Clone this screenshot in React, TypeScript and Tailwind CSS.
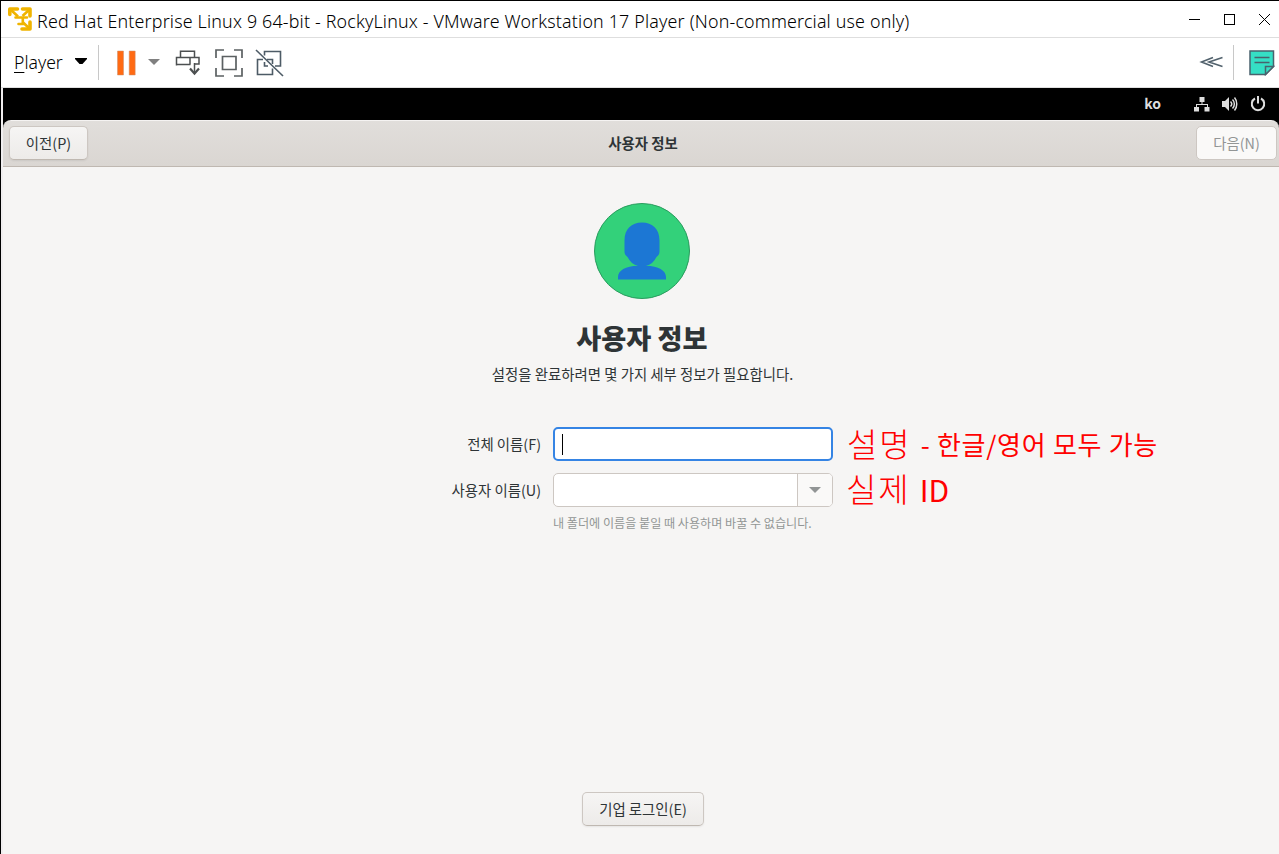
import { ReactNode } from 'react';

const uiFont = "font-['Noto_Sans_CJK_KR','Noto_Sans',sans-serif]";

function VmwareLogo() {
  return (
    <svg width="24" height="24" viewBox="0 0 24 24" fill="none" stroke="#f0b400">
      <path d="M1.800 7.500V2H9.500M14.500 2H22V9M22 15v7H14" strokeWidth="3.600" strokeLinejoin="round" strokeLinecap="round" />
      <path d="M2.500 2.500l7.500 7M21.500 2.500l-7 6.500M21.500 21.500l-7-6.500" strokeWidth="2.600" />
      <path d="M7.500 10.500H19M14.800 10.500v6.500M10.500 17h5" strokeWidth="2.600" strokeLinecap="round" />
    </svg>
  );
}

function TitleBar() {
  return (
    <div className="flex h-[37px] items-center border-b border-[#dedede] bg-white pl-[7px]">
      <VmwareLogo />
      <h1 className="mt-[5px] ml-[5px] font-['Noto_Sans'] text-[17.85px] font-light tracking-[0.175px] whitespace-nowrap text-black">
        Red Hat Enterprise Linux 9 64-bit - RockyLinux - VMware Workstation 17 Player (Non-commercial use only)
      </h1>
      <svg className="ml-auto" width="94" height="24" viewBox="0 0 94 24" fill="none" stroke="#000" shapeRendering="crispEdges">
        <path d="M4 12.500h11M39.500 7.500h10v10h-10z" />
        <path d="M74 7l11 11M85 7L74 18" shapeRendering="auto" />
      </svg>
    </div>
  );
}

function ToolBar() {
  return (
    <div className="flex h-[50px] items-center border-b border-[#e0e0e0] bg-white pl-[12px]">
      <span className="w-[51px] pl-px font-['Noto_Sans'] text-[17.6px] font-light text-black">
        <span className="underline decoration-1 underline-offset-3">P</span>layer
      </span>
      <svg className="mb-[4px] ml-[11px]" width="12" height="8" viewBox="0 0 12 8">
        <path d="M0 1h12v1L7.500 7h-3L0 2z" fill="#000" />
      </svg>
      <div className="ml-[11px] h-[35px] w-px bg-[#c8c8c8]" />
      {/* pause */}
      <svg className="ml-[18px]" width="20" height="26" viewBox="0 0 20 26" fill="#ff6a13" stroke="#c9906e" strokeWidth=".5">
        <path d="M.5 1h6v24h-6zM12.200 1h6v24h-6z" />
      </svg>
      <svg className="mb-[1px] ml-[11px]" width="12" height="7" viewBox="0 0 12 7">
        <path d="M0 0h12L6 6z" fill="#808080" />
      </svg>
      {/* ctrl+alt+del */}
      <svg className="mb-[1px] ml-[15px]" width="26" height="28" viewBox="0 0 26 28" fill="none" stroke="#4c4f50" strokeWidth="1.500">
        <path d="M5.500 9.500V3.200h14v6.300M1.500 17.500v-8h22.500v6.500h-4M1.500 16.500h14M15 9.500v7M19.500 15v9" />
        <path d="M15 20.500l4.500 5 4.500-5" strokeWidth="2.200" />
      </svg>
      {/* fullscreen */}
      <svg className="ml-[14px]" width="28" height="28" viewBox="0 0 28 28" fill="none" stroke="#5b6062" strokeWidth="1.700">
        <path d="M1 9V1h8M19 1h8v8M27 19v8h-8M9 27H1v-8M7.500 7.500h13.500v13H7.500z" />
      </svg>
      {/* unity */}
      <svg className="ml-[12px]" width="29" height="28" viewBox="0 0 29 28" fill="none" stroke="#4d5b66" strokeWidth="1.600">
        <path d="M9.500 6.500V2.500h16V17H20M8 10.500H2.500v15h15V19.500M12 10.500h5.500V15M9.500 13v4h3.500" />
        <path d="M1 1l27 26" />
      </svg>
      <svg className="mb-[1px] ml-auto" width="24" height="12" viewBox="0 0 24 12" fill="none" stroke="#52626d" strokeWidth="1.600">
        <path d="M14 1.500L2.500 6 14 10.500M23.500 1.500L10 6l13.500 4.500" />
      </svg>
      <div className="ml-[10px] h-[35px] w-px bg-[#c8c8c8]" />
      <svg className="mr-[4px] ml-[15px]" width="26" height="26" viewBox="0 0 26 26" stroke="#49626d" strokeWidth="1.500">
        <path d="M1 1h23.500v15.500l-8 8H1z" fill="#35dfc5" />
        <path d="M16.500 24.500v-8h8zM5.500 7.500h15M5.500 12.500h15" fill="#35dfc5" />
      </svg>
    </div>
  );
}

function GnomeTopBar() {
  return (
    <div className="flex h-8 items-center justify-end bg-black pr-[13px] text-[#dedede]">
      <span className={`${uiFont} mr-[33px] pb-[2px] text-[14px] leading-none font-bold`}>ko</span>
      <svg width="16" height="16" viewBox="0 0 16 16" fill="currentColor">
        <path d="M5.500 1h5v5h-5zM0 11h5v4.500H0zM10.500 11h5v4.500h-5zM7.500 6h1v2h5.500v3h-1V9H3v2H2V8h5.500z" />
      </svg>
      <svg className="ml-[12px]" width="16" height="16" viewBox="0 0 16 16" fill="none" stroke="currentColor">
        <path d="M0 5h3l4-4v14l-4-4H0z" fill="currentColor" stroke="none" />
        <path d="M8.500 5.500c1.500 1.500 1.500 3.500 0 5M10.500 3.500c2.500 2.500 2.500 6.500 0 9M12.500 1.500c3 3.500 3 9.500 0 13" strokeWidth="1.500" />
      </svg>
      <svg className="ml-[12px]" width="16" height="16" viewBox="0 0 16 16" fill="none" stroke="currentColor" strokeWidth="2">
        <path d="M5 2.500a6.200 6.200 0 1 0 6 0M8 0v7.500" />
      </svg>
    </div>
  );
}

interface ButtonProps {
  children: ReactNode;
  className?: string;
  disabled?: boolean;
}

function Button({ children, className = '', disabled }: ButtonProps) {
  const state = disabled
    ? 'border-[#cdc7c2] bg-[#faf9f8] text-[#929595]'
    : 'border-[#cdc7c2] border-b-[#bfb8b1] bg-linear-to-t from-[#edebe9] to-[#f6f5f4] text-[#2e3436] shadow-[0_1px_2px_rgba(0,0,0,0.07)]';
  return (
    <button disabled={disabled} className={`flex h-[34px] items-center justify-center rounded-[5px] border text-[14.4px] leading-none ${state} ${className}`}>
      {children}
    </button>
  );
}

function Avatar() {
  return (
    <svg width="96" height="96" viewBox="0 0 96 96">
      <circle cx="48" cy="48" r="47.500" fill="#33d17a" stroke="#2a9c5e" />
      <path
        d="M48 19.500c-10.500 0-17.500 6.500-17.500 18v11c0 2.500 1 4 3 5.500 2.500 5 6 8 10.500 8.700C31.500 63 24 67.500 24 74v2.500h48V74c0-6.500-7.500-11-20-11.300 4.500-.7 8-3.700 10.500-8.700 2-1.500 3-3 3-5.500v-11c0-11.500-7-18-17.500-18z"
        fill="#1c77d4"
      />
    </svg>
  );
}

export default function App() {
  return (
    <div className="h-[854px] w-full overflow-hidden bg-black pt-px pl-px">
      <div className="flex h-full flex-col rounded-tl-[5px] bg-[#f0eeef] pl-[2px]">
        <div className="-ml-[2px] rounded-tl-[5px] bg-white">
          <TitleBar />
          <ToolBar />
        </div>
        <GnomeTopBar />

        <div className={`${uiFont} flex flex-1 flex-col bg-black text-[#2e3436]`}>
          <header className="flex h-[47px] items-center justify-between rounded-t-[8px] border-t border-b border-t-[#f5f3f2] border-b-[#bfb8b1] bg-linear-to-b from-[#e1dedb] to-[#dad6d2] pr-[2px] pb-[2px] pl-[6px]">
            <Button className="w-[79px] pt-px">이전(P)</Button>
            <span className="mt-[2px] ml-[2px] text-[14.4px] leading-none font-bold">사용자 정보</span>
            <Button className="w-[81px] pt-px" disabled>다음(N)</Button>
          </header>

          <main className="flex flex-1 flex-col items-center bg-[#f6f5f4] pt-[36px] pl-[2px]">
            <Avatar />
            <h2 className="mt-[18px] text-[27.2px] leading-10 font-black">사용자 정보</h2>
            <p className="mt-[7px] pl-px text-[14.4px] leading-5">설정을 완료하려면 몇 가지 세부 정보가 필요합니다.</p>

            <div className="mt-[43px] grid w-full grid-cols-[536px_280px_1fr] gap-x-[12px] gap-y-[12px]">
              <label className="self-center text-right text-[14.4px] leading-none">전체 이름(F)</label>
              <div className="flex h-[34px] items-center rounded-[5px] border-2 border-[#3584e4] bg-white pl-[7px]">
                <div className="h-[21px] w-px bg-black" />
              </div>
              <div className="flex h-[34px] items-center pb-[2px] font-light whitespace-nowrap text-[#ff0000]">
                <span className="ml-[2px] text-[33px] leading-none tracking-[2px]">설명</span>
                <span className="mt-[2px] ml-[9px] text-[26px] leading-none font-normal tracking-[0.7px]">- 한글/영어 모두 가능</span>
              </div>

              <label className="self-center text-right text-[14.4px] leading-none">사용자 이름(U)</label>
              <div className="flex h-[34px] overflow-hidden rounded-[5px] border border-[#cdc7c2] bg-white">
                <div className="ml-auto flex w-[35px] items-center justify-center border-l border-[#cdc7c2] bg-[#faf9f8]">
                  <svg width="12" height="6" viewBox="0 0 12 6">
                    <path d="M0 0h12L6 6z" fill="#929595" />
                  </svg>
                </div>
              </div>
              <div className="flex h-[34px] items-baseline font-light whitespace-nowrap text-[#ff0000]">
                <span className="-mt-px ml-[1px] text-[33px] leading-none tracking-[2px]">실제</span>
                <span className="ml-[9px] text-[30px] leading-none font-normal">ID</span>
              </div>

              <p className="col-start-2 -mt-[6px] text-[12.1px] leading-5 whitespace-nowrap text-[#929595]">
                내 폴더에 이름을 붙일 때 사용하며 바꿀 수 없습니다.
              </p>
            </div>

            <Button className="mt-auto mb-[28px] ml-[2px] w-[122px]">기업 로그인(E)</Button>
          </main>
        </div>
      </div>
    </div>
  );
}
